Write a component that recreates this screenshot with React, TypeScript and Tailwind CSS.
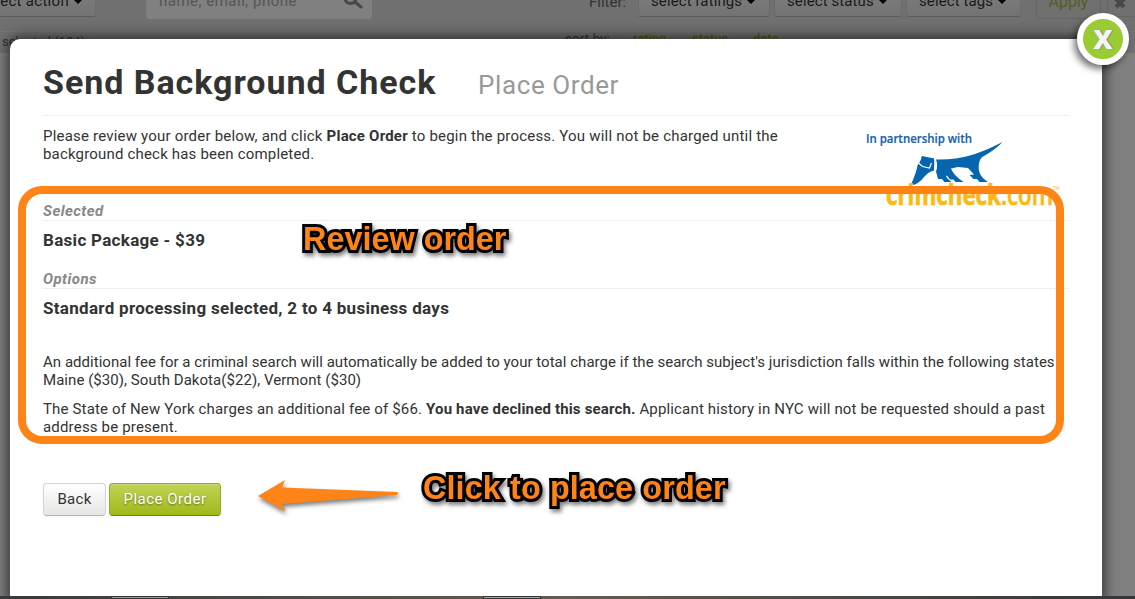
import type { ReactNode } from "react";

const filters = [
  { label: "select ratings", box: "ml-[12px] w-[132px] pl-3" },
  { label: "select status", box: "ml-[4px] w-[128px] pl-3" },
  { label: "select tags", box: "ml-[4px] w-[115px] pl-3" },
];

const toolButton =
  "flex h-[36px] items-center rounded-[3px] border border-[#6b6b6b] border-b-[#5c5c5c] bg-gradient-to-b from-[#808080] to-[#737373] pt-[5px] text-[15px] text-[#1a1a1a]";

export default function App() {
  return (
    <div className="relative h-[599px] w-[1135px] overflow-hidden bg-[#808080] font-['Roboto','Liberation_Sans',sans-serif] text-[#333]">
      <Toolbar />
      <OrderModal />
      <Annotations />
      <Taskbar />
    </div>
  );
}

function Caret() {
  return (
    <span className="ml-[5px] h-0 w-0 shrink-0 border-x-4 border-t-4 border-x-transparent border-t-black" />
  );
}

function Toolbar() {
  return (
    <div className="h-[53px]">
      <div className="flex h-[31px] items-start overflow-hidden bg-[#707070]">
        <div className="-mt-[19px] flex w-full shrink-0 whitespace-nowrap [&>*]:shrink-0">
          <div className={`${toolButton} -ml-[31px] w-[127px] justify-end pr-[13px]`}>
            <span className="tracking-[0.3px]">select action</span>
            <Caret />
          </div>
          <div className="ml-[50px] flex h-[38px] w-[226px] items-center rounded-[4px] bg-[#808080] pr-2 pl-[13px] text-[15px] text-[#555]">
            <span className="pt-[3px] tracking-[0.5px]">name, email, phone</span>
            <svg className="ml-auto" width="22" height="22" viewBox="0 0 22 22" fill="none" stroke="#484848">
              <circle cx="8.500" cy="9" r="5.500" strokeWidth="3" />
              <path d="M13 13l6 5" strokeWidth="3" strokeLinecap="round" />
            </svg>
          </div>
          <span className="mt-[10px] ml-[217px] w-[37px] text-[15px] leading-[22px] text-[#333]">Filter:</span>
          {filters.map((f) => (
            <div key={f.label} className={`${toolButton} ${f.box}`}>
              <span className="tracking-[0.1px]">{f.label}</span>
              <Caret />
            </div>
          ))}
          <div className="ml-[15px] flex h-[38px] w-[65px] items-center justify-center rounded-[3px] border border-[#666] pt-[3px] text-[16px] text-[#51611a]">
            Apply
          </div>
          <div className="ml-[6px] flex h-[36px] w-[40px] items-center rounded-[3px] border border-[#666] pt-[7px] pl-[6px]">
            <svg width="12" height="12" viewBox="0 0 12 12" stroke="#484848" strokeWidth="4">
              <path d="M2 2l8 8M10 2l-8 8" />
            </svg>
          </div>
        </div>
      </div>
      <div className="flex h-[22px] items-start border-t border-[#777] bg-[#707070] text-[13px] leading-[18px] [&>*]:shrink-0">
        <span className="w-[565px] pt-px pl-[2px]">selected (184)</span>
        <div className="-mt-[2px] flex">
          <span className="w-[68px] tracking-[0.3px]">sort by:</span>
          <span className="w-[59px] text-[#465500]">rating</span>
          <span className="w-[61px] text-[#465500]">status</span>
          <span className="text-[#465500]">date</span>
        </div>
      </div>
    </div>
  );
}

function OrderModal() {
  return (
    <div className="absolute top-[39px] left-[10px] h-[570px] w-[1092px] rounded-[10px] bg-white px-[33px] shadow-[0_0_14px_2px_rgba(0,0,0,0.65)]">
      <div className="flex h-[77px] w-[1026px] items-start border-b border-[#eee] whitespace-nowrap">
        <h1 className="w-[435px] pt-[23px] text-[34px] leading-[40px] font-bold tracking-[0.96px]">
          Send Background Check
        </h1>
        <h2 className="pt-[30px] text-[26px] leading-[32px] tracking-[0.6px] text-[#999]">Place Order</h2>
      </div>

      <div className="flex h-[87px] items-start">
        <p className="w-[807px] shrink-0 pt-[11px] text-[15px] leading-[18px] whitespace-nowrap">
          <span className="tracking-[0.2px]">
            Please review your order below, and click <b>Place Order</b> to begin the process. You will not be
            charged until the
          </span>
          <br />
          <span className="tracking-[0.18px]">background check has been completed.</span>
        </p>
        <PartnerLogo />
      </div>

      <Section title="Selected">Basic Package - $39</Section>
      <Section title="Options">Standard processing selected, 2 to 4 business days</Section>

      <div className="mt-[14px] text-[15px] leading-[18px] whitespace-nowrap">
        <p>
          <span className="tracking-[0.03px]">
            An additional fee for a criminal search will automatically be added to your total charge if the search
            subject's jurisdiction falls within the following states
          </span>
          <br />
          <span className="tracking-[0.05px]">Maine ($30), South Dakota($22), Vermont ($30)</span>
        </p>
        <p className="mt-[11px]">
          <span className="tracking-[0.16px]">
            The State of New York charges an additional fee of $66. <b>You have declined this search.</b> Applicant
            history in NYC will not be requested should a past
          </span>
          <br />
          <span className="tracking-[0.18px]">address be present.</span>
        </p>
      </div>

      <div className="mt-[47px] flex gap-[3px] text-[15px]">
        <button className="h-[33px] w-[63px] rounded-[4px] border border-[#d4d4d4] border-b-[#b3b3b3] bg-gradient-to-b from-white to-[#e6e6e6] tracking-[0.3px] shadow-[0_1px_2px_rgba(0,0,0,0.05)]">
          Back
        </button>
        <button className="h-[33px] w-[112px] rounded-[4px] border border-[#98ad20] border-b-[#71820f] bg-gradient-to-b from-[#c3d252] to-[#a2b912] tracking-[0.5px] text-white shadow-[inset_0_1px_0_rgba(255,255,255,0.2),0_1px_2px_rgba(0,0,0,0.05)] [text-shadow:0_1px_2px_rgba(0,0,0,0.45)]">
          Place Order
        </button>
      </div>

      <button className="absolute -top-[26px] -right-[27px] flex h-[52px] w-[52px] items-center justify-center rounded-full border-[6px] border-white bg-[#9c3] font-['Open_Sans'] text-[27px] font-extrabold text-[#f4f4f4] shadow-[-3px_4px_7px_rgba(0,0,0,0.55)] [text-shadow:1px_0_1px_#777]">
        X
      </button>
    </div>
  );
}

function Section({ title, children }: { title: string; children: ReactNode }) {
  return (
    <section className="h-[68px]">
      <h3 className="h-[18px] w-[1026px] border-b border-[#eee] text-[15px] leading-[17px] font-bold tracking-[0.45px] text-[#888] italic">
        {title}
      </h3>
      <p className="pt-[8px] text-[17px] leading-[22px] font-bold tracking-[0.3px] whitespace-nowrap">{children}</p>
    </section>
  );
}

function PartnerLogo() {
  return (
    <svg className="mt-[4px] shrink-0" width="202" height="90" viewBox="850 120 202 90" overflow="visible">
      <text
        x="866"
        y="143"
        textLength="106"
        lengthAdjust="spacingAndGlyphs"
        fontFamily="Open Sans, sans-serif"
        fontSize="12.500"
        fontWeight="600"
        fill="#1560a8"
        stroke="#1560a8"
        strokeWidth="0.200"
      >
        In partnership with
      </text>
      {/* tail, body and legs */}
      <path
        d="M935 159.500c14 .5 27-1.500 40-5.500 9-3 18-7 27.500-12-6 6.500-13 11-21 15.500-3 4-3 9-2.500 13 1 5 4 8 9 11.500h-8.500l-2.500-3h-3.500l-4-4 4.500-.5-6-6.500-10-1-7 1.500c2 5 6 9 12.500 13.500h-8l-2-2.500h-3.500l-3-4-1 .5c1 2.500 3 4 5.500 6h-7l-2.500-3h-4l-2-7.500c1.500-4 1.500-8 0-12z"
        fill="#0565ae"
      />
      {/* head and snout */}
      <path d="M922 156l4.500 1 8 1.500-.5 12c-4 1-7 3-10 6.500-3 4-6 6-10 8l-2.500-1.500c2.500-6 5-12 6-18z" fill="#0565ae" />
      <path d="M921 158l-2.500 5 4 3.500 7 1.500 2-5" fill="none" stroke="#fff" strokeWidth="1.200" />
      <path d="M934.500 158l1 6-1.500 9" fill="none" stroke="#fff" strokeWidth="1" />
      <text
        x="886"
        y="204.500"
        textLength="167"
        lengthAdjust="spacingAndGlyphs"
        fontFamily="Open Sans, sans-serif"
        fontSize="28"
        fill="#fdb913"
        stroke="#fdb913"
        strokeWidth="0.700"
      >
        <tspan fontWeight="700">crimcheck</tspan>
        <tspan fontWeight="600">.com</tspan>
      </text>
      <text x="1053" y="190" fontFamily="Open Sans, sans-serif" fontSize="4.500" fill="#fdb913">
        TM
      </text>
    </svg>
  );
}

// Callouts drawn over the modal
function Annotations() {
  const note =
    "absolute font-['Liberation_Sans',sans-serif] text-[32.4px] leading-[36px] font-bold whitespace-nowrap text-[#ff8418] [-webkit-text-stroke:6px_#000] [paint-order:stroke_fill] [filter:drop-shadow(2px_3px_2px_rgba(0,0,0,0.5))]";
  return (
    <>
      <div className="absolute top-[186px] left-[18px] h-[258px] w-[1046px] rounded-[24px] border-8 border-[#ff8418]" />
      <span className={`${note} top-[221px] left-[303px]`}>Review order</span>
      <span className={`${note} top-[470px] left-[423px] tracking-[0.1px]`}>Click to place order</span>
      <svg
        className="absolute top-[472px] left-[250px] [filter:drop-shadow(1px_3px_2px_rgba(0,0,0,0.5))]"
        width="160"
        height="50"
        viewBox="250 472 160 50"
      >
        <path d="M258 496L285 480l-3 7.500 115 4.500q2 1 0 3L282 504l3.500 7.500z" fill="#ff8418" />
      </svg>
    </>
  );
}

function Taskbar() {
  return (
    <div className="absolute bottom-0 left-0 flex h-[3px] w-full bg-gradient-to-r from-[#39393b] via-[#665c50] to-[#353538]">
      <div className="ml-[111px] h-[3px] w-[58px] border border-[#333] bg-[#999]" />
      <div className="ml-[314px] h-[3px] w-[58px] border border-[#333] bg-[#b0a898]" />
    </div>
  );
}
